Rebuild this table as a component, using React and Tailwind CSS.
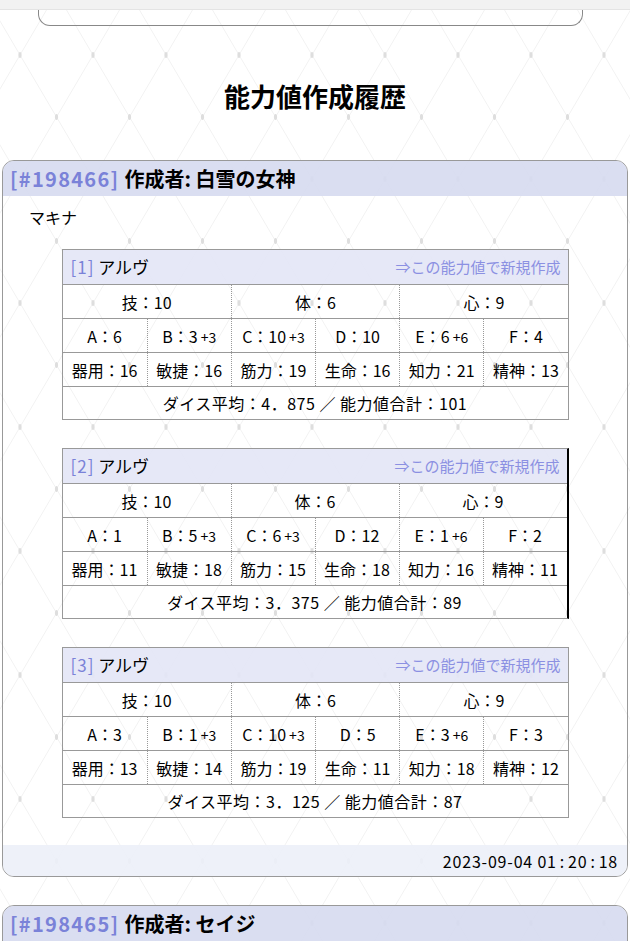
import React from 'react';

const font = { fontFamily: '"Noto Sans CJK JP", "Noto Sans", sans-serif' };

const rolls = [
  {
    no: 1,
    name: 'アルヴ',
    big: ['技：10', '体：6', '心：9'],
    abc: [['A：6'], ['B：3', '+3'], ['C：10', '+3'], ['D：10'], ['E：6', '+6'], ['F：4']],
    sub: ['器用：16', '敏捷：16', '筋力：19', '生命：16', '知力：21', '精神：13'],
    avg: '4．875',
    total: 101,
  },
  {
    no: 2,
    name: 'アルヴ',
    big: ['技：10', '体：6', '心：9'],
    abc: [['A：1'], ['B：5', '+3'], ['C：6', '+3'], ['D：12'], ['E：1', '+6'], ['F：2']],
    sub: ['器用：11', '敏捷：18', '筋力：15', '生命：18', '知力：16', '精神：11'],
    avg: '3．375',
    total: 89,
    odd: true,
  },
  {
    no: 3,
    name: 'アルヴ',
    big: ['技：10', '体：6', '心：9'],
    abc: [['A：3'], ['B：1', '+3'], ['C：10', '+3'], ['D：5'], ['E：3', '+6'], ['F：3']],
    sub: ['器用：13', '敏捷：14', '筋力：19', '生命：11', '知力：18', '精神：12'],
    avg: '3．125',
    total: 87,
  },
];

function Pattern() {
  return (
    <svg className="absolute inset-0 w-full h-full pointer-events-none" aria-hidden="true">
      <defs>
        <pattern id="lattice" width="73" height="124" patternUnits="userSpaceOnUse" patternTransform="translate(20 55)">
          <path d="M0 0 L36.5 62 L73 0 M0 124 L36.5 62 L73 124" stroke="#f2f2f2" strokeWidth="1" fill="none" />
          <ellipse cx="0" cy="0" rx="1.6" ry="3" fill="#dedede" />
          <ellipse cx="73" cy="0" rx="1.6" ry="3" fill="#dedede" />
          <ellipse cx="0" cy="124" rx="1.6" ry="3" fill="#dedede" />
          <ellipse cx="73" cy="124" rx="1.6" ry="3" fill="#dedede" />
          <ellipse cx="36.5" cy="62" rx="1.6" ry="3" fill="#dedede" />
        </pattern>
      </defs>
      <rect width="100%" height="100%" fill="url(#lattice)" />
    </svg>
  );
}

function RollTable({ roll }) {
  return (
    <div
      className={`w-[507px] mx-auto border border-[#999] text-[16px] text-black ${
        roll.odd ? 'border-r-2 border-r-black' : ''
      }`}
    >
      <div className="h-[34px] bg-[#e3e5f6]/90 flex items-center justify-between pl-[8px] pr-[7px]">
        <div className="text-[17px]">
          <span className="text-[#7a82d8] tracking-[1px]">[{roll.no}]</span> {roll.name}
        </div>
        <a href="#" className="text-[15px] text-[#8b90e2]">⇒この能力値で新規作成</a>
      </div>
      <div className="grid grid-cols-3 h-[34px] border-t border-[#999]">
        {roll.big.map((b, i) => (
          <div
            key={i}
            className={`flex items-center justify-center ${i > 0 ? 'border-l border-dotted border-[#999]' : ''}`}
          >
            {b}
          </div>
        ))}
      </div>
      <div className="grid grid-cols-6 h-[34px] border-t border-[#999]">
        {roll.abc.map(([v, bonus], i) => (
          <div
            key={i}
            className={`flex items-center justify-center ${i > 0 ? 'border-l border-dotted border-[#999]' : ''}`}
          >
            <span>
              {v}
              {bonus && <span className="text-[14px] ml-[3px]">{bonus}</span>}
            </span>
          </div>
        ))}
      </div>
      <div className="grid grid-cols-6 h-[34px] border-t border-[#999]">
        {roll.sub.map((s, i) => (
          <div
            key={i}
            className={`flex items-center justify-center ${i > 0 ? 'border-l border-dotted border-[#999]' : ''}`}
          >
            {s}
          </div>
        ))}
      </div>
      <div className="h-[33px] border-t border-[#999] flex items-center justify-center tracking-[0.5px]">
        ダイス平均：{roll.avg} ／ 能力値合計：{roll.total}
      </div>
    </div>
  );
}

function HistoryCard({ id, author, children, date }) {
  return (
    <div className="mx-[2px] border border-[#999] rounded-[12px] overflow-hidden">
      <div className="h-[35px] bg-[#d6daef]/90 flex items-center pl-[7px] text-[20px] font-bold text-black">
        <span className="text-[#7a82d8] tracking-[1.3px]">[#{id}]</span>
        <span className="ml-[5px]">作成者: {author}</span>
      </div>
      {children}
      {date && (
        <div className="h-[31px] bg-[#eceff8]/90 flex items-center justify-end pr-[9px] text-[16px] text-black tracking-[0.8px]">
          {date.split(':').map((part, i) => (
            <React.Fragment key={i}>
              {i > 0 && <span className="mx-[3px]">:</span>}
              {part}
            </React.Fragment>
          ))}
        </div>
      )}
    </div>
  );
}

export default function App() {
  return (
    <div className="relative min-h-screen bg-white overflow-hidden" style={font}>
      <Pattern />
      <div className="relative">
        <div className="h-[10px] bg-[#f2f2f2] border-b border-[#e4e4e4]" />
        <div className="mx-[38px] w-[545px] h-[16px] border border-t-0 border-[#888] rounded-b-[12px]" />

        <h1 className="mt-[52px] text-center text-[26px] leading-[36px] font-bold text-black">能力値作成履歴</h1>

        <div className="mt-[46px] flex flex-col gap-[28px]">
          <HistoryCard id="198466" author="白雪の女神" date="2023-09-04 01:20:18">
            <div className="pt-[9px] pb-[27px]">
              <div className="pl-[26px] text-[16px] leading-[24px] text-black">マキナ</div>
              <div className="mt-[20px] flex flex-col gap-[28px]">
                {rolls.map((r) => (
                  <RollTable key={r.no} roll={r} />
                ))}
              </div>
            </div>
          </HistoryCard>

          <HistoryCard id="198465" author="セイジ">
            <div className="pt-[9px] pb-[27px]">
              <div className="pl-[26px] text-[16px] leading-[24px] text-black">セイジ</div>
              <div className="mt-[20px] flex flex-col gap-[28px]">
                <RollTable roll={{ ...rolls[0], odd: false }} />
              </div>
            </div>
          </HistoryCard>
        </div>
      </div>
    </div>
  );
}
